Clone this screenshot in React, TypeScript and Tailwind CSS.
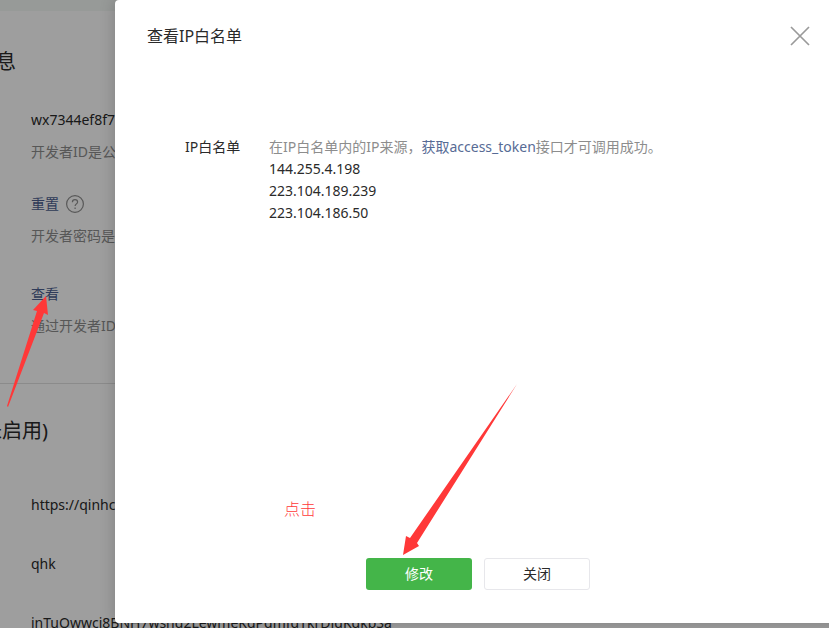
interface SettingProps {
  value?: string;
  action?: string;
  hint?: string;
  help?: boolean;
}

const IP_LIST = ["144.255.4.198", "223.104.189.239", "223.104.186.50"];

function HelpIcon() {
  return (
    <svg className="h-5 w-5" viewBox="0 0 20 20" fill="none" stroke="#8f8f8f" strokeWidth="1.2">
      <circle cx="10" cy="10" r="8.4" />
      <path d="M7.4 8.2C7.4 6.5 8.5 5.6 10 5.6s2.6 1 2.6 2.3c0 1.9-2.5 2-2.5 4.1" />
      <path d="M10.1 13.4v1.5" />
    </svg>
  );
}

function Setting({ value, action, hint, help }: SettingProps) {
  return (
    <div className="flex flex-col gap-2.5">
      <div className="flex h-[22px] items-center gap-1.5">
        {value && <span>{value}</span>}
        {action && (
          <a href="#" className="text-[#4c6090]">
            {action}
          </a>
        )}
        {help && <HelpIcon />}
      </div>
      {hint && <p className="text-[#8d8d8d]">{hint}</p>}
    </div>
  );
}

function SettingsPage() {
  return (
    <main className="whitespace-nowrap">
      <div className="h-[11px] bg-[#f4f8f6]" />
      <section className="border-b border-[#e0e0e0] pt-[37px] pb-[46px]">
        <h2 className="-ml-1 text-xl leading-7">息</h2>
        <div className="mt-[33px] flex flex-col pl-[31px]">
          <Setting value="wx7344ef8f7" hint="开发者ID是公众号开发识别码" />
          <div className="mt-[30px]">
            <Setting action="重置" help hint="开发者密码是校验公众号" />
          </div>
          <div className="mt-9">
            <Setting action="查看" hint="通过开发者ID及密码" />
          </div>
        </div>
      </section>
      <section className="pt-[33px]">
        <h2 className="-ml-[18px] text-xl leading-7">未启用)</h2>
        <div className="mt-[49px] flex flex-col gap-[37px] pl-[31px]">
          <Setting value="https://qinhc" />
          <Setting value="qhk" />
          <Setting value="jnTuQwwcj8BNH7wshd2LewmeKdPdmfdTkrDJdKdkbSa" />
        </div>
      </section>
    </main>
  );
}

function WhitelistDialog() {
  return (
    <div
      role="dialog"
      aria-labelledby="dialog-title"
      className="-mr-3 flex flex-1 flex-col rounded-[4px] bg-white shadow-[0_0_16px_rgba(0,0,0,0.2)]"
    >
      <header className="flex items-center justify-between pt-6 pr-[30px] pl-8">
        <h3 id="dialog-title" className="text-base leading-6">
          查看IP白名单
        </h3>
        <button type="button" aria-label="关闭对话框" className="cursor-pointer">
          <svg className="h-[22px] w-[22px]" viewBox="0 0 22 22" stroke="#9a9a9a" strokeWidth="1.7">
            <path d="M2 2l18 18M20 2L2 20" />
          </svg>
        </button>
      </header>

      <dl className="mt-[88px] flex pl-[70px]">
        <dt className="w-[84px]">IP白名单</dt>
        <dd className="flex-1">
          <p className="text-[#8d8d8d]">
            在IP白名单内的IP来源，
            <a href="#" className="text-[#576b95]">
              获取access_token
            </a>
            接口才可调用成功。
          </p>
          <ul>
            {IP_LIST.map((ip) => (
              <li key={ip}>{ip}</li>
            ))}
          </ul>
        </dd>
      </dl>

      <footer className="mt-auto flex justify-center gap-3 pb-[33px]">
        <button type="button" className="h-8 w-[106px] cursor-pointer rounded-[3px] bg-[#44b549] text-white">
          修改
        </button>
        <button type="button" className="h-8 w-[106px] cursor-pointer rounded-[3px] border border-[#e7e7eb]">
          关闭
        </button>
      </footer>
    </div>
  );
}

// Hand-drawn markers that sit on top of everything
function Annotations() {
  return (
    <div className="pointer-events-none absolute inset-0 text-[#ff3838]">
      <svg className="absolute top-0 left-0 h-[628px] w-[829px]" viewBox="0 0 829 628" fill="currentColor">
        <path d="M46 296L33 310L37 311L7 406L8 407L44 313L48 315Z" />
        <path d="M403 555L406 536L410 538L517 384L417 543L419 546Z" />
      </svg>
      <span className="absolute top-[497px] left-[284px] text-base leading-6 font-light">点击</span>
    </div>
  );
}

export default function App() {
  return (
    <div className="relative h-screen overflow-hidden bg-white font-['Noto_Sans','Noto_Sans_CJK_SC',sans-serif] text-sm leading-[22px] font-normal text-[#2a2a2a]">
      <SettingsPage />
      <div className="absolute inset-0 flex bg-black/38 pb-[5px] pl-[115px]">
        <WhitelistDialog />
      </div>
      <Annotations />
    </div>
  );
}
